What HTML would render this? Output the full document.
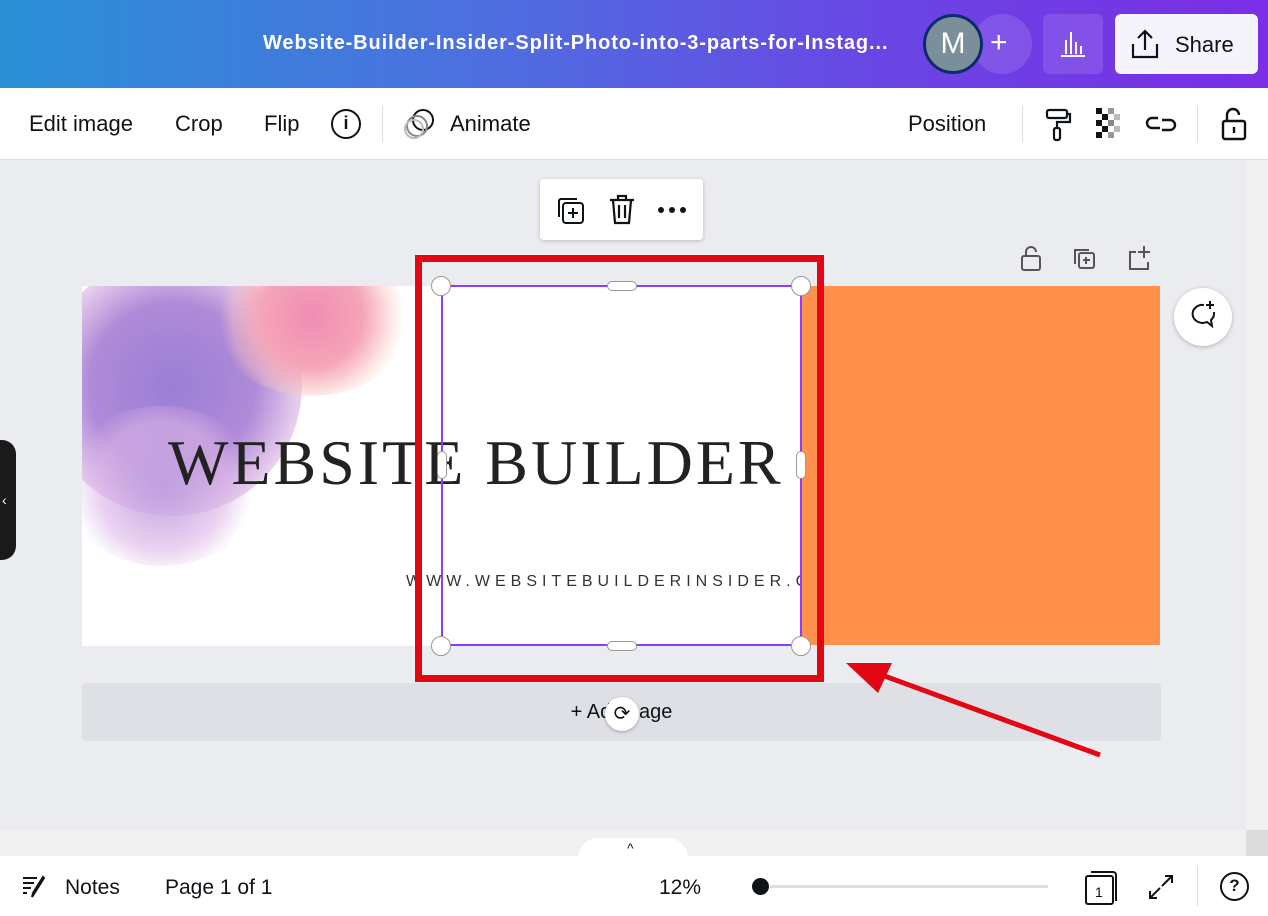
<!DOCTYPE html>
<html><head><style>
*{margin:0;padding:0;box-sizing:border-box}
body{width:1268px;height:916px;overflow:hidden;font-family:"Liberation Sans",sans-serif;background:#ebecf0;position:relative;color:#0e1318}
.top{position:absolute;left:0;top:0;width:1268px;height:88px;background:linear-gradient(90deg,#2a90d6 0%,#4f6de0 40%,#6a45e4 70%,#7a2ee6 100%)}
.abs{position:absolute}
.tb{position:absolute;top:88px;left:0;width:1268px;height:72px;background:#fff;border-bottom:1px solid #dcdde0}
.tb span{position:absolute;top:23px;font-size:22px}
.bot{position:absolute;top:856px;left:0;width:1268px;height:60px;background:#fff}
.bot span{position:absolute;top:20px;font-size:20px}
</style></head><body>
<div class="top">
<div class="abs" style="left:263px;top:32px;color:#fff;font-weight:bold;font-size:20px;letter-spacing:0.9px;white-space:nowrap">Website-Builder-Insider-Split-Photo-into-3-parts-for-Instag...</div>
<div class="abs" style="left:972px;top:14px;width:60px;height:60px;border-radius:30px;background:rgba(255,255,255,0.12)"></div>
<div class="abs" style="left:990px;top:26px;color:#fff;font-size:30px">+</div>
<div class="abs" style="left:923px;top:14px;width:60px;height:60px;border-radius:30px;background:#7a8f99;border:3px solid #0c2b6b;color:#fff;font-size:30px;text-align:center;line-height:54px">M</div>
<div class="abs" style="left:1043px;top:14px;width:60px;height:60px;border-radius:6px;background:rgba(255,255,255,0.12)"></div>
<svg class="abs" style="left:1058px;top:30px" width="30" height="28" fill="none" stroke="#fff" stroke-width="2"><path d="M3 26h24M8 24V10M13 24V2M18 24V12M23 24V16"/></svg>
<div class="abs" style="left:1115px;top:14px;width:143px;height:60px;border-radius:6px;background:#f5f3fb"></div>
<svg class="abs" style="left:1130px;top:28px" width="30" height="32" fill="none" stroke="#0e1318" stroke-width="2.2"><path d="M15 22V3M8 10l7-7 7 7M3 16v13h24V16"/></svg>
<div class="abs" style="left:1175px;top:32px;font-size:22px;color:#0e1318">Share</div>
</div>
<div class="tb">
<span style="left:29px">Edit image</span><span style="left:175px">Crop</span><span style="left:264px">Flip</span>
<div class="abs" style="left:331px;top:21px;width:30px;height:30px;border:2.5px solid #0e1318;border-radius:50%;text-align:center;font-weight:bold;font-size:18px;line-height:25px">i</div>
<div class="abs" style="left:382px;top:18px;width:1px;height:36px;background:#dcdde0"></div>
<svg class="abs" style="left:402px;top:20px" width="36" height="32" fill="none" stroke-width="2"><circle cx="21" cy="12" r="10" stroke="#0e1318"/><circle cx="15" cy="18" r="10" stroke="#888"/><circle cx="12" cy="21" r="9" stroke="#bbb"/></svg>
<span style="left:450px">Animate</span>
<span style="left:908px">Position</span>
<div class="abs" style="left:1022px;top:18px;width:1px;height:36px;background:#dcdde0"></div>
<svg class="abs" style="left:1044px;top:20px" width="30" height="34" fill="none" stroke="#0e1318" stroke-width="2.2"><rect x="3" y="2" width="20" height="8" rx="2"/><path d="M23 6h3v8H13v6"/><rect x="10" y="20" width="6" height="12" rx="2"/></svg>
<svg class="abs" style="left:1094px;top:20px" width="32" height="32"><g fill="#0e1318"><rect x="2" y="0" width="6" height="6"/><rect x="14" y="0" width="6" height="6" fill="#999"/><rect x="8" y="6" width="6" height="6"/><rect x="20" y="6" width="6" height="6" fill="#bbb"/><rect x="2" y="12" width="6" height="6"/><rect x="14" y="12" width="6" height="6" fill="#888"/><rect x="8" y="18" width="6" height="6"/><rect x="20" y="18" width="6" height="6" fill="#bbb"/><rect x="2" y="24" width="6" height="6"/><rect x="14" y="24" width="6" height="6" fill="#999"/></g></svg>
<svg class="abs" style="left:1144px;top:24px" width="34" height="24" fill="none" stroke="#0e1318" stroke-width="2.4"><path d="M14 6H8a5 5 0 0 0 0 10h8M18 8h8a5 5 0 0 1 0 10h-8"/></svg>
<div class="abs" style="left:1197px;top:18px;width:1px;height:36px;background:#dcdde0"></div>
<svg class="abs" style="left:1220px;top:18px" width="28" height="36" fill="none" stroke="#0e1318" stroke-width="2.4"><path d="M7 15V9a6 6 0 0 1 12 0"/><rect x="3" y="15" width="22" height="18" rx="2"/><path d="M14 21v6"/></svg>
</div>
<div class="abs" style="left:1246px;top:160px;width:22px;height:670px;background:#f1f1f1"></div>
<div class="abs" style="left:0;top:830px;width:1246px;height:26px;background:#f1f1f1"></div>
<div class="abs" style="left:1246px;top:830px;width:22px;height:26px;background:#dcdcdc"></div>
<div class="abs" style="left:578px;top:838px;width:110px;height:20px;background:#fff;border-radius:20px 20px 0 0"></div>
<div class="abs" style="left:627px;top:840px;font-size:14px">^</div>
<div class="abs" style="left:540px;top:179px;width:163px;height:61px;background:#fff;border-radius:4px;box-shadow:0 1px 4px rgba(0,0,0,.2)"></div>
<svg class="abs" style="left:556px;top:196px" width="30" height="30" fill="none" stroke="#0e1318" stroke-width="2"><rect x="7" y="7" width="20" height="20" rx="3"/><path d="M3 21V5a2 2 0 0 1 2-2h16M17 12v10M12 17h10"/></svg>
<svg class="abs" style="left:608px;top:194px" width="28" height="32" fill="none" stroke="#0e1318" stroke-width="2.2"><path d="M2 6h24M10 6V2h8v4M5 6l2 23h14l2-23M11 11v13M17 11v13"/></svg>
<svg class="abs" style="left:656px;top:205px" width="34" height="10" fill="#0e1318"><circle cx="5" cy="5" r="3"/><circle cx="16" cy="5" r="3"/><circle cx="27" cy="5" r="3"/></svg>
<svg class="abs" style="left:1020px;top:244px" width="140" height="30" fill="none" stroke="#555" stroke-width="2"><path d="M6 12V8a5 5 0 0 1 10 0"/><rect x="2" y="12" width="18" height="14" rx="2"/><rect x="59" y="9" width="15" height="15" rx="2"/><path d="M55 20V6h14M66 13v7M63 16h7"/><path d="M116 8h-6v17h18v-7M124 2v12M118 8h12"/></svg>
<div class="abs" style="left:82px;top:286px;width:360px;height:360px;background:#fff;overflow:hidden">
<div class="abs" style="left:-40px;top:-30px;width:260px;height:260px;border-radius:50%;background:radial-gradient(circle,#9a7fd6 0%,#b08ad8 45%,rgba(210,160,220,.5) 70%,rgba(255,255,255,0) 75%)"></div>
<div class="abs" style="left:130px;top:-50px;width:200px;height:160px;border-radius:50%;background:radial-gradient(circle,#f08cb4 0%,#f5a5b8 40%,rgba(250,200,190,.4) 62%,rgba(255,255,255,0) 72%)"></div>
<div class="abs" style="left:-20px;top:120px;width:200px;height:160px;border-radius:50%;background:radial-gradient(circle,#c0a0e0 0%,rgba(220,180,230,.6) 50%,rgba(255,255,255,0) 70%)"></div>
</div>
<div class="abs" style="left:442px;top:286px;width:360px;height:360px;background:#fff"></div>
<div class="abs" style="left:802px;top:286px;width:358px;height:359px;background:#ff914d"></div>
<div class="abs" style="left:168px;top:426px;font-family:'Liberation Serif',serif;font-size:64px;letter-spacing:3px;color:#222;white-space:nowrap">WEBSITE BUILDER</div>
<div class="abs" style="left:406px;top:573px;font-size:16px;letter-spacing:5px;color:#333;width:396px;overflow:hidden;white-space:nowrap">WWW.WEBSITEBUILDERINSIDER.COM</div>
<div class="abs" style="left:82px;top:683px;width:1079px;height:58px;background:#dfe0e5;border-radius:4px;text-align:center;line-height:58px;font-size:20px">+ Add page</div>
<div class="abs" style="left:605px;top:697px;width:34px;height:34px;border-radius:50%;background:#fff;box-shadow:0 1px 3px rgba(0,0,0,.3);text-align:center;line-height:34px;font-size:20px">⟳</div>
<div class="abs" style="left:441px;top:285px;width:361px;height:361px;border:2px solid #8b3dff"></div>
<div class="abs" style="left:415px;top:255px;width:409px;height:427px;border:7px solid #e30613"></div>
<div class="abs" style="left:431px;top:276px;width:20px;height:20px;border-radius:50%;background:#fff;border:1px solid #999"></div>
<div class="abs" style="left:791px;top:276px;width:20px;height:20px;border-radius:50%;background:#fff;border:1px solid #999"></div>
<div class="abs" style="left:431px;top:636px;width:20px;height:20px;border-radius:50%;background:#fff;border:1px solid #999"></div>
<div class="abs" style="left:791px;top:636px;width:20px;height:20px;border-radius:50%;background:#fff;border:1px solid #999"></div>
<div class="abs" style="left:607px;top:281px;width:30px;height:10px;border-radius:5px;background:#fff;border:1px solid #999"></div>
<div class="abs" style="left:607px;top:641px;width:30px;height:10px;border-radius:5px;background:#fff;border:1px solid #999"></div>
<div class="abs" style="left:437px;top:451px;width:10px;height:28px;border-radius:5px;background:#fff;border:1px solid #999"></div>
<div class="abs" style="left:796px;top:451px;width:10px;height:28px;border-radius:5px;background:#fff;border:1px solid #999"></div>
<svg class="abs" style="left:840px;top:655px" width="265" height="105"><path d="M20 12L260 100" stroke="#e30613" stroke-width="5"/><path d="M6 8l46 0-14 30z" fill="#e30613"/></svg>
<div class="abs" style="left:1174px;top:288px;width:58px;height:58px;border-radius:50%;background:#fff;box-shadow:0 1px 4px rgba(0,0,0,.25)"></div>
<svg class="abs" style="left:1186px;top:299px" width="34" height="34" fill="none" stroke="#0e1318" stroke-width="2"><path d="M18 6a10 9 0 1 0 3 17l5 4-1-6a9 9 0 0 0 3-8M24 2v8M20 6h8"/></svg>
<div class="abs" style="left:0;top:440px;width:16px;height:120px;background:#1a1a1a;border-radius:0 14px 14px 0;color:#fff;font-size:14px;line-height:120px;padding-left:2px">‹</div>
<div class="bot">
<svg class="abs" style="left:22px;top:18px" width="26" height="24" fill="none" stroke="#0e1318" stroke-width="2"><path d="M1 4h14M1 9h11M1 14h8M1 19h4M22 4l-10 16-2 3 1-4 10-16z"/></svg>
<span style="left:65px;font-size:21px">Notes</span><span style="left:165px;font-size:21px">Page 1 of 1</span>
<span style="left:659px;font-size:21px">12%</span>
<div class="abs" style="left:770px;top:29px;width:278px;height:3px;background:#dcdde0"></div>
<div class="abs" style="left:752px;top:22px;width:17px;height:17px;border-radius:50%;background:#0e1318"></div>
<svg class="abs" style="left:1083px;top:14px" width="36" height="36" fill="none" stroke="#0e1318" stroke-width="2"><rect x="3" y="6" width="27" height="28" rx="2"/><path d="M8 2h22a3 3 0 0 1 3 3v26"/><text x="12" y="27" font-size="14" fill="#0e1318" stroke="none" font-family="Liberation Sans">1</text></svg>
<svg class="abs" style="left:1148px;top:18px" width="26" height="26" fill="none" stroke="#0e1318" stroke-width="2"><path d="M14 12L24 2M17 2h7v7M12 14L2 24M2 17v7h7"/></svg>
<div class="abs" style="left:1197px;top:10px;width:1px;height:40px;background:#dcdde0"></div>
<div class="abs" style="left:1220px;top:16px;width:29px;height:29px;border:2.5px solid #0e1318;border-radius:50%;text-align:center;font-weight:bold;font-size:17px;line-height:24px">?</div>
</div>
</body></html>
